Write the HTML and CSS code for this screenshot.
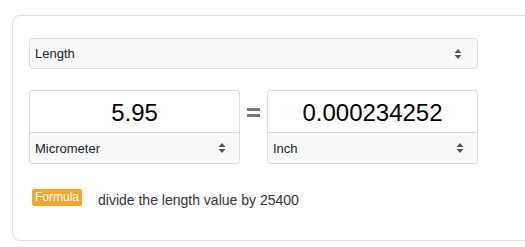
FILE: index.html
```html
<!DOCTYPE html>
<html lang="en">
  <head>
    <meta name="viewport" content="width=device-width">
    <title>Length converter</title>
    <link rel="stylesheet" href="styles.css">
  </head>
  <body>
    <div class="card">
      <div class="picker picker_big">
        <span>Length</span>
        <svg class="arrows" width="8" height="12" viewBox="0 0 8 12"><path d="M4 1 L7.5 5 H0.5 Z M4 11 L7.5 7 H0.5 Z" fill="#555"/></svg>
      </div>
      <div class="row">
        <div class="unit">
          <div class="value">5.95</div>
          <div class="picker">
            <span>Micrometer</span>
            <svg class="arrows" width="8" height="12" viewBox="0 0 8 12"><path d="M4 1 L7.5 5 H0.5 Z M4 11 L7.5 7 H0.5 Z" fill="#555"/></svg>
          </div>
        </div>
        <div class="equals"><i></i><i></i></div>
        <div class="unit">
          <div class="value">0.000234252</div>
          <div class="picker">
            <span>Inch</span>
            <svg class="arrows" width="8" height="12" viewBox="0 0 8 12"><path d="M4 1 L7.5 5 H0.5 Z M4 11 L7.5 7 H0.5 Z" fill="#555"/></svg>
          </div>
        </div>
      </div>
      <div class="formula">
        <span class="badge">Formula</span>
        <span class="text">divide the length value by 25400</span>
      </div>
    </div>
  </body>
</html>
```
FILE: styles.css
```css
* {
  margin: 0;
  padding: 0;
  box-sizing: border-box;
}
body {
  font-family: "Liberation Sans", Arial, sans-serif;
  color: #111;
  background: #fff;
  padding: 15px 0 0 12px;
  overflow: hidden;
}
.card {
  height: 226px;
  border: 1px solid #e2e2e2;
  border-right: none;
  border-radius: 8px 0 0 8px;
  padding: 22px 0 0 16px;
}
.picker {
  display: flex;
  align-items: center;
  justify-content: space-between;
  background: #f8f9fa;
  font-size: 13px;
  color: #222;
  padding: 0 13px 0 5px;
  height: 31px;
}
.picker_big {
  width: 449px;
  border: 1px solid #dcdcdc;
  border-radius: 4px;
  padding-right: 15px;
}
.row {
  display: flex;
  align-items: flex-start;
  margin-top: 21px;
}
.unit {
  width: 211px;
  border: 1px solid #dcdcdc;
  border-radius: 3px;
  overflow: hidden;
}
.value {
  height: 42px;
  border-bottom: 1px solid #dcdcdc;
  font-size: 24px;
  text-align: center;
  line-height: 42px;
  padding-top: 1px;
  color: #000;
}
.unit .picker {
  height: 30px;
}
.equals {
  width: 27px;
  height: 43px;
  display: flex;
  flex-direction: column;
  align-items: center;
  justify-content: center;
  gap: 3px;
  padding-top: 1px;
}
.equals i {
  display: block;
  width: 13px;
  height: 3px;
  background: #777;
}
.formula {
  display: flex;
  align-items: center;
  margin-top: 22px;
  padding-left: 3px;
}
.badge {
  background: #f5a631;
  color: #fff;
  font-size: 12px;
  border-radius: 2px;
  padding: 1px 3px 2px;
  line-height: 14px;
}
.text {
  font-size: 14px;
  color: #333;
  margin-left: 16px;
  padding-top: 6px;
}
```
